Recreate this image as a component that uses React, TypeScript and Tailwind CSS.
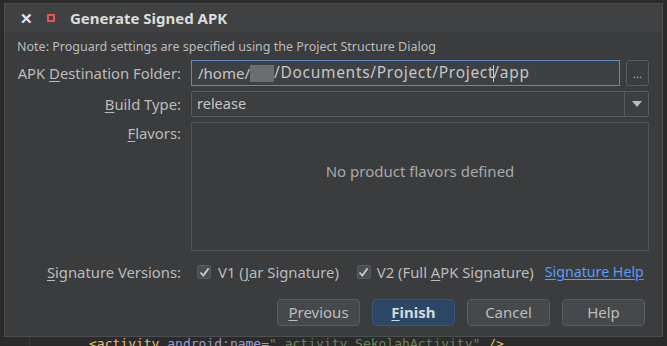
import React from "react"

const font = { fontFamily: '"Noto Sans", "Open Sans", sans-serif' }

function U({ children }: { children: React.ReactNode }) {
  return <span className="underline underline-offset-2">{children}</span>
}

function Check() {
  return (
    <span className="flex h-[14px] w-[14px] items-center justify-center rounded-[2px] border border-[#5a5d5f] bg-[#4a4d4f]">
      <svg width="11" height="11" viewBox="0 0 11 11">
        <path d="M1.5 5.5 L4.3 8.6 L9.6 1.4" fill="none" stroke="#c8c8c8" strokeWidth="1.8" />
      </svg>
    </span>
  )
}

function Btn({ children, primary }: { children: React.ReactNode; primary?: boolean }) {
  return (
    <button
      className={`h-[27px] w-[83px] rounded-[4px] border text-[15px] ${
        primary
          ? "border-[#3a5675] bg-[#2c4766] font-bold text-[#d4d8dc]"
          : "border-[#5a5d5f] bg-[#46494b] text-[#bcbcbc]"
      }`}
    >
      {children}
    </button>
  )
}

export default function App() {
  return (
    <div className="h-[346px] w-[667px] overflow-hidden bg-[#2b2b2b] text-[#bbbbbb]" style={font}>
      <div className="h-[3px]" />
      <div className="ml-[4px] w-[659px] border border-t-[#4a4b4c] border-[#4c4d4e] bg-[#3b3c3e]">
        <div className="flex h-[28px] items-center bg-[#404142] pl-[15px]">
          <span className="text-[15px] font-bold text-[#e8e8e8]">✕</span>
          <span className="ml-[14px] h-[8px] w-[8px] border-2 border-[#f05050]" />
          <span className="ml-[15px] text-[15px] font-bold text-[#dcdcdc]">Generate Signed APK</span>
        </div>
        <div className="px-[12px] pt-[7px] text-[12.5px] leading-[16px] text-[#bbbbbb]">
          Note: Proguard settings are specified using the Project Structure Dialog
        </div>
        <div className="mt-[5px] grid grid-cols-[176px_1fr] items-start gap-x-[10px] gap-y-[5px] pr-[13px] text-[14.8px]">
          <div className="whitespace-nowrap text-right leading-[26px]">
            APK <U>D</U>estination Folder:
          </div>
          <div className="flex gap-[6px]">
            <div className="flex h-[26px] flex-1 items-center whitespace-nowrap border border-[#5b8ac6] bg-[#3e4143] pl-[6px] text-[15px] text-[#c6c6c6]">
              /home/<span className="inline-block h-[17px] w-[24px] bg-[#6b6d6f]" />
              <span className="text-[15.5px] tracking-[0.7px]">/Documents/Project/Project</span>
              <span className="mx-[-1px] inline-block h-[17px] w-px bg-[#c8c8c8]" />
              <span className="text-[15.5px] tracking-[0.7px]">/app</span>
            </div>
            <div className="flex h-[26px] w-[23px] items-center justify-center rounded-[3px] border border-[#5a5d5f] text-[11px] leading-none">
              ...
            </div>
          </div>
          <div className="text-right leading-[26px]">
            <U>B</U>uild Type:
          </div>
          <div className="flex h-[26px] items-center rounded-[2px] border border-[#5a5d5f] bg-[#3c3e40]">
            <span className="flex-1 pl-[5px] text-[14.5px] text-[#c6c6c6]">release</span>
            <span className="flex h-full w-[24px] items-center justify-center border-l border-[#5a5d5f]">
              <svg width="10" height="7" viewBox="0 0 10 7">
                <path d="M0 0 H10 L5 6 Z" fill="#bcbcbc" />
              </svg>
            </span>
          </div>
          <div className="pt-[1px] text-right leading-[20px]">
            <U>F</U>lavors:
          </div>
          <div className="flex h-[129px] items-start justify-center border border-[#515355] pt-[37px] text-[15px] text-[#a9a9a9]">
            No product flavors defined
          </div>
        </div>
        <div className="mt-[11px] flex items-center whitespace-nowrap text-[14.8px] leading-[20px]">
          <span className="w-[176px] text-right">
            <U>S</U>ignature Versions:
          </span>
          <span className="ml-[16px]">
            <Check />
          </span>
          <span className="ml-[7px]">
            V1 (<U>J</U>ar Signature)
          </span>
          <span className="ml-[18px]">
            <Check />
          </span>
          <span className="ml-[6px]">
            V2 (Full <U>A</U>PK Signature)
          </span>
          <span className="ml-[11px] text-[14.2px] text-[#589df6] underline underline-offset-2">Signature Help</span>
        </div>
        <div className="mb-[10px] mt-[17px] flex justify-end gap-[12px] pr-[17px]">
          <Btn>
            <U>P</U>revious
          </Btn>
          <Btn primary>
            <U>F</U>inish
          </Btn>
          <Btn>Cancel</Btn>
          <Btn>Help</Btn>
        </div>
      </div>
      <div className="flex h-[20px]">
        <div className="w-[29px]" />
        <div className="w-[60px] border-l border-[#3a3a3a]" />
        <div
          className="whitespace-pre text-[13px] leading-[14px]"
          style={{ fontFamily: '"DejaVu Sans Mono", monospace' }}
        >
          <span className="text-[#e8bf6a]">&lt;activity </span>
          <span className="text-[#9c9cd0]">android:name=</span>
          <span className="text-[#6a8759]">".activity.SekolahActivity"</span>
          <span className="text-[#e8bf6a]"> /&gt;</span>
        </div>
      </div>
    </div>
  )
}
